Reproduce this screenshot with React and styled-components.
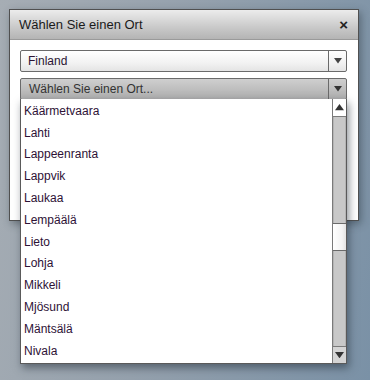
import styled, { createGlobalStyle } from 'styled-components';

const places = [
	'Käärmetvaara',
	'Lahti',
	'Lappeenranta',
	'Lappvik',
	'Laukaa',
	'Lempäälä',
	'Lieto',
	'Lohja',
	'Mikkeli',
	'Mjösund',
	'Mäntsälä',
	'Nivala',
];

const GlobalStyle = createGlobalStyle`
	html, body {
		margin: 0;
		height: 380px;
		overflow: hidden;
	}
	body {
		background: linear-gradient(100deg, #a6adb4 0%, #95a1ad 45%, #7a91a6 100%);
		font-family: 'Liberation Sans', Arial, sans-serif;
	}
`;

const Page = styled.div`
	padding: 9px;
`;

const Dialog = styled.div`
	position: relative;
	width: 348px;
	border: 1px solid #505050;
	background: #fff;
	box-shadow: 2px 3px 8px rgba(40, 50, 60, 0.45);
`;

const TitleBar = styled.div`
	height: 30px;
	display: flex;
	align-items: center;
	justify-content: space-between;
	padding: 0 10px 0 9px;
	background: linear-gradient(#ececec, #c9c9c9 60%, #b4b4b4);
	border-bottom: 1px solid #9a9a9a;
	box-sizing: border-box;
	font-size: 13px;
	color: #1a1a1a;
`;

const Close = styled.span`
	font-size: 15px;
	font-weight: bold;
	color: #222;
	line-height: 1;
`;

const Body = styled.div`
	padding: 10px 11px 0 10px;
	height: 170px;
	display: flex;
	flex-direction: column;
	gap: 6px;
`;

const Select = styled.div`
	height: 20px;
	display: flex;
	border: 1px solid #6a6a6a;
	border-radius: 2px;
	background: ${(p) =>
		p.$active
			? 'linear-gradient(#cfcfcf, #bdbdbd 55%, #adadad)'
			: 'linear-gradient(#ffffff, #f2f2f2 60%, #e4e4e4)'};
	font-size: 12px;
	color: ${(p) => (p.$active ? '#333' : '#2b1433')};
`;

const SelectText = styled.div`
	flex: 1;
	display: flex;
	align-items: center;
	padding-left: ${(p) => (p.$active ? '8px' : '7px')};
`;

const ArrowBox = styled.div`
	width: 17px;
	border-left: 1px solid #6a6a6a;
	display: flex;
	align-items: center;
	justify-content: center;
`;

const Dropdown = styled.div`
	position: absolute;
	left: 10px;
	top: 89px;
	width: 325px;
	height: 264px;
	display: flex;
	border: 1px solid #5a5a5a;
	border-top: none;
	background: #fff;
	box-shadow: 2px 4px 8px rgba(30, 40, 50, 0.5);
`;

const List = styled.ul`
	flex: 1;
	margin: 0;
	padding: 1px 0 0;
	list-style: none;
`;

const Item = styled.li`
	height: 21.8px;
	display: flex;
	align-items: center;
	padding-left: 3px;
	font-size: 12px;
	color: #2e1236;
`;

const Scrollbar = styled.div`
	width: 13px;
	display: flex;
	flex-direction: column;
	border-left: 1px solid #7a7a7a;
`;

const ScrollButton = styled.div`
	height: ${(p) => p.$h}px;
	display: flex;
	align-items: center;
	justify-content: center;
	background: ${(p) => (p.$up ? '#fff' : '#d4d4d4')};
	border-bottom: ${(p) => (p.$up ? '1px solid #7a7a7a' : 'none')};
	border-top: ${(p) => (p.$up ? 'none' : '1px solid #7a7a7a')};
	box-sizing: border-box;
`;

const Track = styled.div`
	flex: 1;
	display: flex;
	flex-direction: column;
	background: #c8c8c8;
	box-shadow: inset 1px 0 0 #b4b4b4, inset -1px 0 0 #b4b4b4;
	padding-top: 106px;
`;

const Thumb = styled.div`
	height: 26px;
	background: linear-gradient(90deg, #ffffff, #f3f3f3 70%, #e2e2e2);
	border-top: 1px solid #6a6a6a;
	border-bottom: 1px solid #6a6a6a;
`;

const Triangle = ({ down, size = 9, color = '#333' }) => (
	<svg width={size} height={size * 0.7} viewBox="0 0 10 7">
		{down ? <polygon points="0,0 10,0 5,7" fill={color} /> : <polygon points="0,7 10,7 5,0" fill={color} />}
	</svg>
);

const App = () => {
	return (
		<Page>
			<GlobalStyle />
			<Dialog>
				<TitleBar>
					<span>Wählen Sie einen Ort</span>
					<Close>×</Close>
				</TitleBar>
				<Body>
					<Select>
						<SelectText>Finland</SelectText>
						<ArrowBox>
							<Triangle down size={8} color="#444" />
						</ArrowBox>
					</Select>
					<Select $active>
						<SelectText $active>Wählen Sie einen Ort...</SelectText>
						<ArrowBox>
							<Triangle down size={8} color="#333" />
						</ArrowBox>
					</Select>
				</Body>

				<Dropdown>
					<List>
						{places.map((name) => (
							<Item key={name}>{name}</Item>
						))}
					</List>
					<Scrollbar>
						<ScrollButton $up $h={18}>
							<Triangle size={9} color="#333" />
						</ScrollButton>
						<Track>
							<Thumb />
						</Track>
						<ScrollButton $h={17}>
							<Triangle down size={9} color="#333" />
						</ScrollButton>
					</Scrollbar>
				</Dropdown>
			</Dialog>
		</Page>
	);
};

export default App;
